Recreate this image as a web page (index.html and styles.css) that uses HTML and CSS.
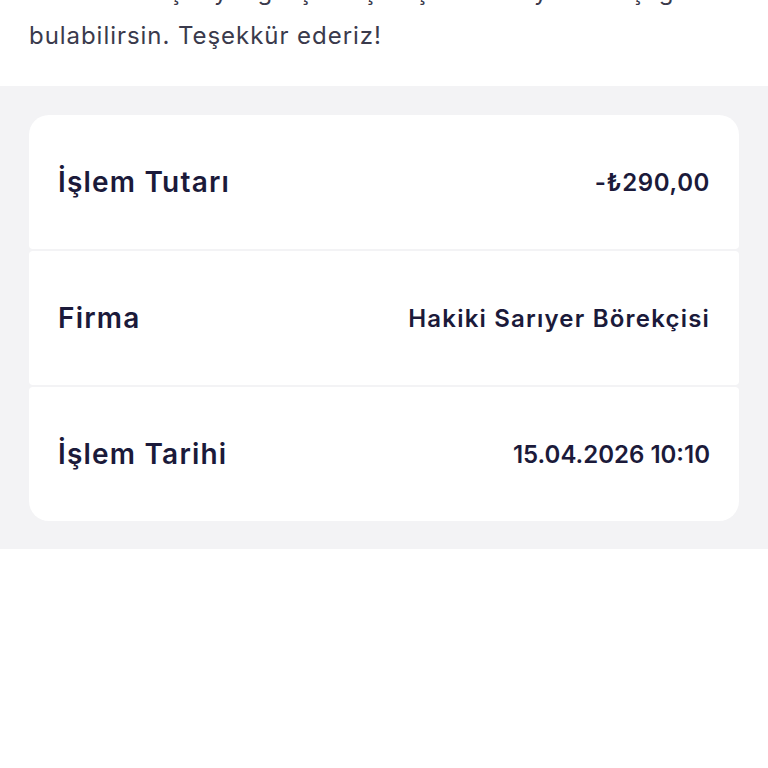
FILE: index.html
```html
<!DOCTYPE html>
<html lang="tr">
<head>
<meta charset="utf-8">
<link rel="stylesheet" href="styles.css">
</head>
<body>
<section class="intro">
  <p class="intro-text">Ödemen başarıyla gerçekleşti. İşlem detaylarını aşağıda bulabilirsin. Teşekkür ederiz!</p>
</section>
<section class="panel">
  <div class="card">
    <div class="row"><span class="label">İşlem Tutarı</span><span class="value">-₺290,00</span></div>
    <div class="row"><span class="label">Firma</span><span class="value value-wide">Hakiki Sarıyer Börekçisi</span></div>
    <div class="row"><span class="label">İşlem Tarihi</span><span class="value value-tight">15.04.2026 10:10</span></div>
  </div>
</section>
</body>
</html>
```
FILE: styles.css
```css
* { box-sizing: border-box; }
html, body { margin: 0; padding: 0; background: #ffffff; }
body { font-family: "Inter", "Noto Sans", sans-serif; color: #1b1a3a; }
.intro { display: flow-root; padding: 0 29px; height: 86px; overflow: hidden; }
.intro-text {
  margin: -30px 0 0 0;
  font-size: 24px;
  line-height: 44px;
  font-weight: 400;
  letter-spacing: 0.95px;
  color: #3a3a4c;
  width: 712px;
}
.panel { background: #f3f3f5; padding: 29px 29px 28px; }
.card {
  display: flex;
  flex-direction: column;
  gap: 2px;
  background: #f3f3f5;
  border-radius: 20px;
  overflow: hidden;
}
.row {
  height: 134px;
  background: #ffffff;
  display: flex;
  align-items: center;
  justify-content: space-between;
  padding: 0 29px;
  border-radius: 4px;
}
.label { font-size: 28px; font-weight: 600; letter-spacing: 1.2px; color: #1b1a3a; }
.value { font-size: 24px; font-weight: 600; letter-spacing: 0.6px; color: #1b1a3a; }
.value-wide { letter-spacing: 1.2px; }
.value-tight { letter-spacing: 0px; }
```
